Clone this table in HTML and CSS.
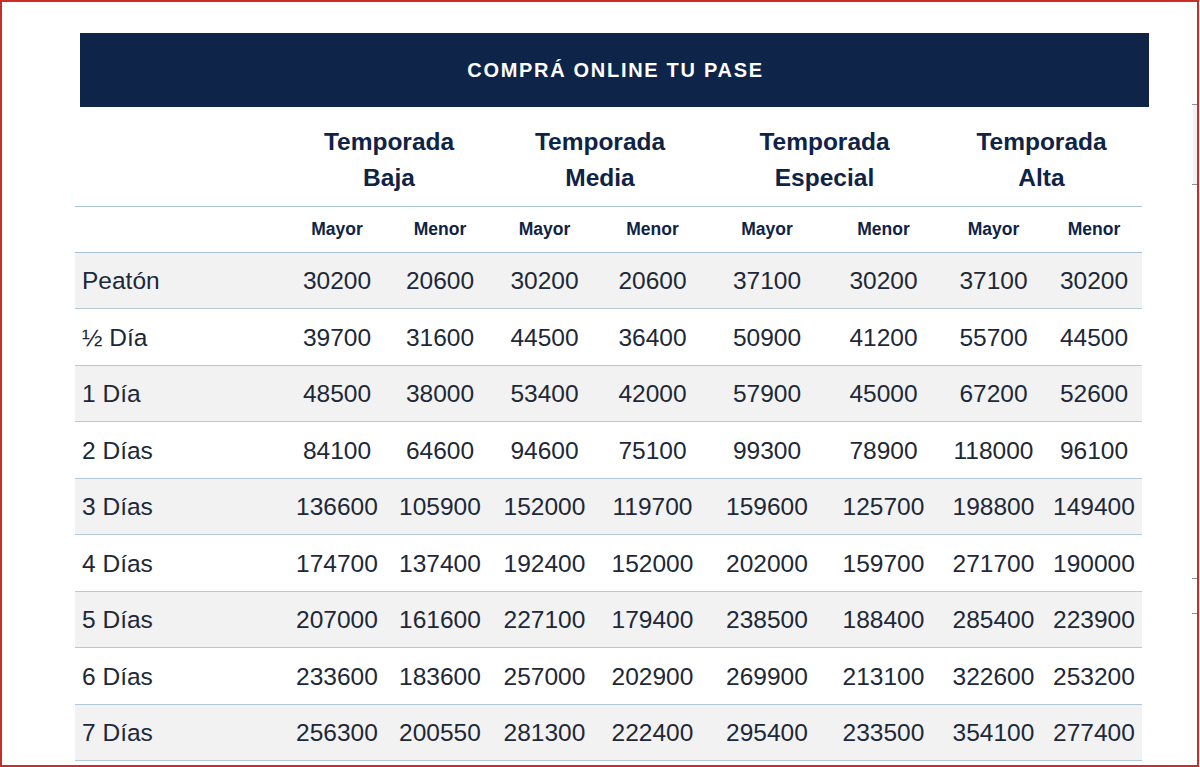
FILE: index.html
```html
<!DOCTYPE html>
<html lang="es">
<head>
<meta charset="utf-8">
<title>Comprá online tu pase</title>
<link rel="stylesheet" href="styles.css">
</head>
<body>
<div class="frame">
  <div class="content">
    <div class="banner">COMPRÁ ONLINE TU PASE</div>
    <table class="prices">
      <colgroup>
        <col class="c-label"><col class="c1"><col class="c2"><col class="c3"><col class="c4"><col class="c5"><col class="c6"><col class="c7"><col class="c8">
      </colgroup>
      <thead>
        <tr class="season">
          <th></th>
          <th colspan="2">Temporada<br>Baja</th>
          <th colspan="2">Temporada<br>Media</th>
          <th colspan="2">Temporada<br>Especial</th>
          <th colspan="2">Temporada<br>Alta</th>
        </tr>
        <tr class="age">
          <th></th>
          <th>Mayor</th><th>Menor</th>
          <th>Mayor</th><th>Menor</th>
          <th>Mayor</th><th>Menor</th>
          <th>Mayor</th><th>Menor</th>
        </tr>
      </thead>
      <tbody>
        <tr><td>Peatón</td><td>30200</td><td>20600</td><td>30200</td><td>20600</td><td>37100</td><td>30200</td><td>37100</td><td>30200</td></tr>
        <tr><td>½ Día</td><td>39700</td><td>31600</td><td>44500</td><td>36400</td><td>50900</td><td>41200</td><td>55700</td><td>44500</td></tr>
        <tr><td>1 Día</td><td>48500</td><td>38000</td><td>53400</td><td>42000</td><td>57900</td><td>45000</td><td>67200</td><td>52600</td></tr>
        <tr><td>2 Días</td><td>84100</td><td>64600</td><td>94600</td><td>75100</td><td>99300</td><td>78900</td><td>118000</td><td>96100</td></tr>
        <tr><td>3 Días</td><td>136600</td><td>105900</td><td>152000</td><td>119700</td><td>159600</td><td>125700</td><td>198800</td><td>149400</td></tr>
        <tr><td>4 Días</td><td>174700</td><td>137400</td><td>192400</td><td>152000</td><td>202000</td><td>159700</td><td>271700</td><td>190000</td></tr>
        <tr><td>5 Días</td><td>207000</td><td>161600</td><td>227100</td><td>179400</td><td>238500</td><td>188400</td><td>285400</td><td>223900</td></tr>
        <tr><td>6 Días</td><td>233600</td><td>183600</td><td>257000</td><td>202900</td><td>269900</td><td>213100</td><td>322600</td><td>253200</td></tr>
        <tr><td>7 Días</td><td>256300</td><td>200550</td><td>281300</td><td>222400</td><td>295400</td><td>233500</td><td>354100</td><td>277400</td></tr>
      </tbody>
    </table>
  </div>
  <div class="edge">
    <span class="tick t1"></span>
    <span class="strip"></span>
    <span class="tick t2"></span>
    <span class="tick t3"></span>
    <span class="tick t4"></span>
  </div>
</div>
</body>
</html>
```

FILE: styles.css
```css
* { box-sizing: border-box; }

html, body {
  margin: 0;
  padding: 0;
  background: #ffffff;
}

body {
  font-family: "Liberation Sans", Arial, Helvetica, sans-serif;
  color: #1d2838;
}

.frame {
  position: relative;
  width: 1199px;
  height: 767px;
  border: 2px solid #cc2b26;
  overflow: hidden;
}

.content {
  padding: 31px 0 0 73px;
}

.banner {
  margin-left: 5px;
  width: 1069px;
  height: 74px;
  background: #0e2449;
  color: #ffffff;
  font-weight: bold;
  font-size: 20px;
  letter-spacing: 1.7px;
  display: flex;
  align-items: center;
  justify-content: center;
  padding: 1px 0 0 2px;
}

.prices {
  width: 1067px;
  border-collapse: collapse;
  table-layout: fixed;
}

.c-label { width: 211px; }
.c1 { width: 102px; }
.c2 { width: 104px; }
.c3 { width: 105px; }
.c4 { width: 111px; }
.c5 { width: 118px; }
.c6 { width: 115px; }
.c7 { width: 105px; }
.c8 { width: 96px; }

.prices th {
  color: #0f2346;
  font-weight: bold;
  text-align: center;
  padding: 0;
}

.season th {
  height: 99px;
  font-size: 24.5px;
  line-height: 36px;
  border-bottom: 1px solid #a7c3d8;
  padding: 7px 0 0;
}

.age th {
  height: 46px;
  font-size: 17.5px;
  border-bottom: 1px solid #a7c3d8;
  padding-top: 1px;
}

.prices td {
  height: 56.5px;
  padding: 2px 0 0;
  font-size: 24.5px;
  text-align: center;
  border-bottom: 1px solid #b4cadb;
  white-space: nowrap;
}

.prices td:first-child {
  text-align: left;
  padding-left: 7px;
}

.prices tbody tr:nth-child(odd) td {
  background: #f2f2f2;
}

.edge {
  position: absolute;
  right: 0;
  top: 0;
  width: 6px;
  height: 100%;
}

.tick {
  position: absolute;
  right: 0;
  width: 5px;
  height: 1px;
  background: #8a8f96;
}

.t1 { top: 102px; }
.t2 { top: 182px; }
.t3 { top: 576px; }
.t4 { top: 611px; }

.strip {
  position: absolute;
  right: 0;
  top: 103px;
  width: 4px;
  height: 79px;
  background: #eef3fa;
}
```
